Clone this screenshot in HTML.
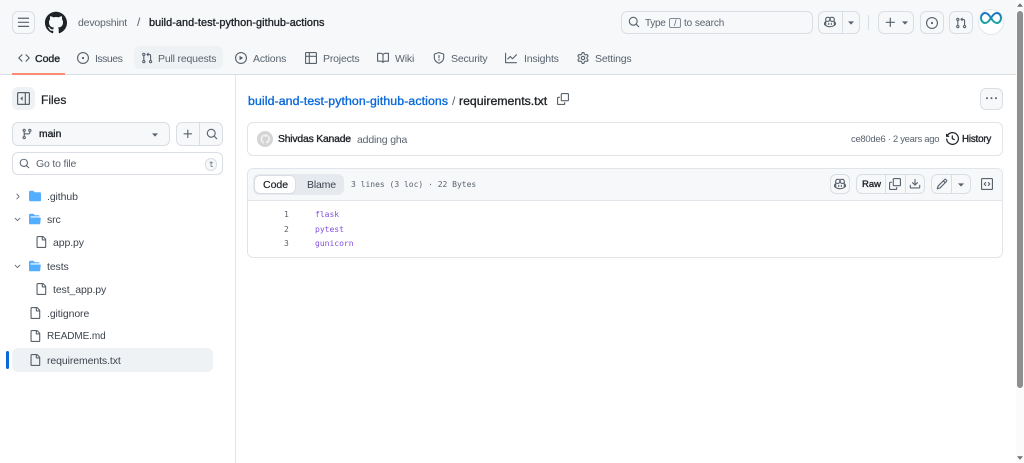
<!DOCTYPE html>
<html lang="en"><head><meta charset="utf-8"><title>requirements.txt</title>
<style>
*{box-sizing:border-box}
html,body{margin:0;padding:0;width:1024px;height:463px;overflow:hidden;background:#fff;font-family:"Liberation Sans",Arial,sans-serif;color:#1f2328;font-size:10.5px;letter-spacing:-.18px}
.a,.t,svg.i{position:absolute}
.t{white-space:nowrap;line-height:14px;height:14px}
svg.i{fill:#59636e;overflow:visible}
.m{color:#59636e}
.b{position:absolute;border:1px solid #d9dee4;border-radius:6px;background:#f6f8fa}
.s{font-weight:400;-webkit-text-stroke:.35px;letter-spacing:0}
.mono{font-family:"DejaVu Sans Mono","Liberation Mono",monospace;font-size:8px;letter-spacing:0}
.v{position:absolute;width:1px;background:#d9dee4}
.tr{color:#3d444d;letter-spacing:-.1px}
</style></head><body>
<svg width="0" height="0" style="position:absolute"><defs>
<linearGradient id="inf" x1="0" y1="0" x2="0" y2="1"><stop offset="0" stop-color="#1b74c5"/><stop offset="1" stop-color="#18a5a0"/></linearGradient>
<symbol id="bars" viewBox="0 0 16 16"><path d="M1 2.75A.75.75 0 0 1 1.75 2h12.5a.75.75 0 0 1 0 1.5H1.75A.75.75 0 0 1 1 2.75Zm0 5A.75.75 0 0 1 1.75 7h12.5a.75.75 0 0 1 0 1.5H1.75A.75.75 0 0 1 1 7.75ZM1.75 12h12.5a.75.75 0 0 1 0 1.5H1.75a.75.75 0 0 1 0-1.5Z"/></symbol>
<symbol id="gh" viewBox="0 0 24 24"><path d="M12.5.75C6.146.75 1 5.896 1 12.25c0 5.089 3.292 9.387 7.863 10.91.575.101.79-.244.79-.546 0-.273-.014-1.178-.014-2.142-2.889.532-3.636-.704-3.866-1.35-.13-.331-.69-1.352-1.18-1.625-.402-.216-.977-.748-.014-.762.906-.014 1.553.834 1.769 1.179 1.035 1.74 2.688 1.25 3.349.948.1-.747.402-1.25.733-1.538-2.559-.287-5.232-1.279-5.232-5.678 0-1.25.445-2.285 1.178-3.09-.115-.288-.517-1.467.115-3.048 0 0 .963-.302 3.163 1.179.92-.259 1.897-.388 2.875-.388.977 0 1.955.13 2.875.388 2.2-1.495 3.162-1.179 3.162-1.179.633 1.581.23 2.76.115 3.048.733.805 1.179 1.825 1.179 3.09 0 4.413-2.688 5.39-5.247 5.678.417.36.776 1.05.776 2.128 0 1.538-.014 2.774-.014 3.162 0 .302.216.662.79.547C20.709 21.637 24 17.324 24 12.25 24 5.896 18.854.75 12.5.75Z"/></symbol>
<symbol id="code" viewBox="0 0 16 16"><path d="m11.28 3.22 4.25 4.25a.75.75 0 0 1 0 1.06l-4.25 4.25a.749.749 0 0 1-1.275-.326.749.749 0 0 1 .215-.734L13.94 8l-3.72-3.72a.749.749 0 0 1 .326-1.275.749.749 0 0 1 .734.215Zm-6.56 0a.751.751 0 0 1 1.042.018.751.751 0 0 1 .018 1.042L2.06 8l3.72 3.72a.749.749 0 0 1-.326 1.275.749.749 0 0 1-.734-.215L.47 8.53a.75.75 0 0 1 0-1.06Z"/></symbol>
<symbol id="issue" viewBox="0 0 16 16"><path d="M8 9.5a1.5 1.5 0 1 0 0-3 1.5 1.5 0 0 0 0 3Z"/><path d="M8 0a8 8 0 1 1 0 16A8 8 0 0 1 8 0ZM1.5 8a6.5 6.5 0 1 0 13 0 6.5 6.5 0 0 0-13 0Z"/></symbol>
<symbol id="pr" viewBox="0 0 16 16"><path d="M1.5 3.25a2.25 2.25 0 1 1 3 2.122v5.256a2.251 2.251 0 1 1-1.5 0V5.372A2.25 2.25 0 0 1 1.5 3.25Zm5.677-.177L9.573.677A.25.25 0 0 1 10 .854V2.5h1A2.5 2.5 0 0 1 13.5 5v5.628a2.251 2.251 0 1 1-1.5 0V5a1 1 0 0 0-1-1h-1v1.646a.25.25 0 0 1-.427.177L7.177 3.427a.25.25 0 0 1 0-.354ZM3.75 2.5a.75.75 0 1 0 0 1.5.75.75 0 0 0 0-1.5Zm0 9.5a.75.75 0 1 0 0 1.5.75.75 0 0 0 0-1.5Zm8.25.75a.75.75 0 1 0 1.5 0 .75.75 0 0 0-1.5 0Z"/></symbol>
<symbol id="play" viewBox="0 0 16 16"><path d="M8 0a8 8 0 1 1 0 16A8 8 0 0 1 8 0ZM1.5 8a6.5 6.5 0 1 0 13 0 6.5 6.5 0 0 0-13 0Zm4.879-2.773 4.264 2.559a.25.25 0 0 1 0 .428l-4.264 2.559A.25.25 0 0 1 6 10.559V5.442a.25.25 0 0 1 .379-.215Z"/></symbol>
<symbol id="table" viewBox="0 0 16 16"><path d="M0 1.75C0 .784.784 0 1.75 0h12.5C15.216 0 16 .784 16 1.75v12.5A1.75 1.75 0 0 1 14.25 16H1.75A1.75 1.75 0 0 1 0 14.25ZM6.5 6.5v8h7.75a.25.25 0 0 0 .25-.25V6.5Zm8-1.5V1.75a.25.25 0 0 0-.25-.25H6.5V5Zm-13 1.5v7.75c0 .138.112.25.25.25H5v-8ZM5 5V1.5H1.75a.25.25 0 0 0-.25.25V5Z"/></symbol>
<symbol id="book" viewBox="0 0 16 16"><path d="M0 1.75A.75.75 0 0 1 .75 1h4.253c1.227 0 2.317.59 3 1.501A3.743 3.743 0 0 1 11.006 1h4.245a.75.75 0 0 1 .75.75v10.5a.75.75 0 0 1-.75.75h-4.507a2.25 2.25 0 0 0-1.591.659l-.622.621a.75.75 0 0 1-1.06 0l-.622-.621A2.25 2.25 0 0 0 5.258 13H.75a.75.75 0 0 1-.75-.75Zm7.251 10.324.004-5.073-.002-2.253A2.25 2.25 0 0 0 5.003 2.5H1.5v9h3.757a3.75 3.75 0 0 1 1.994.574ZM8.755 4.75l-.004 7.322a3.752 3.752 0 0 1 1.992-.572H14.5v-9h-3.495a2.25 2.25 0 0 0-2.25 2.25Z"/></symbol>
<symbol id="shield" viewBox="0 0 16 16"><path d="M7.467.133a1.748 1.748 0 0 1 1.066 0l5.25 1.68A1.75 1.75 0 0 1 15 3.48V7c0 1.566-.32 3.182-1.303 4.682-.983 1.498-2.585 2.813-5.032 3.855a1.697 1.697 0 0 1-1.33 0c-2.447-1.042-4.049-2.357-5.032-3.855C1.32 10.182 1 8.566 1 7V3.48a1.75 1.75 0 0 1 1.217-1.667Zm.61 1.429a.25.25 0 0 0-.153 0l-5.25 1.68a.25.25 0 0 0-.174.238V7c0 1.358.275 2.666 1.057 3.86.784 1.194 2.121 2.34 4.366 3.297a.196.196 0 0 0 .154 0c2.245-.956 3.582-2.104 4.366-3.298C13.225 9.666 13.5 8.36 13.5 7V3.48a.251.251 0 0 0-.174-.237l-5.25-1.68ZM8.75 4.75v3a.75.75 0 0 1-1.5 0v-3a.75.75 0 0 1 1.5 0ZM9 10.5a1 1 0 1 1-2 0 1 1 0 0 1 2 0Z"/></symbol>
<symbol id="graph" viewBox="0 0 16 16"><path d="M1.5 1.75V13.5h13.75a.75.75 0 0 1 0 1.5H.75a.75.75 0 0 1-.75-.75V1.75a.75.75 0 0 1 1.5 0Zm14.28 2.53-5.25 5.25a.75.75 0 0 1-1.06 0L7 7.06 4.28 9.78a.751.751 0 0 1-1.042-.018.751.751 0 0 1-.018-1.042l3.25-3.25a.75.75 0 0 1 1.06 0L10 7.94l4.72-4.72a.751.751 0 0 1 1.042.018.751.751 0 0 1 .018 1.042Z"/></symbol>
<symbol id="gear" viewBox="0 0 16 16"><path d="M8 0a8.2 8.2 0 0 1 .701.031C9.444.095 9.99.645 10.16 1.29l.288 1.107c.018.066.079.158.212.224.231.114.454.243.668.386.123.082.233.09.299.071l1.103-.303c.644-.176 1.392.021 1.82.63.27.385.506.792.704 1.218.315.675.111 1.422-.364 1.891l-.814.806c-.049.048-.098.147-.088.294.016.257.016.515 0 .772-.01.147.038.246.088.294l.814.806c.475.469.679 1.216.364 1.891a7.977 7.977 0 0 1-.704 1.217c-.428.61-1.176.807-1.82.63l-1.102-.302c-.067-.019-.177-.011-.3.071a5.909 5.909 0 0 1-.668.386c-.133.066-.194.158-.211.224l-.29 1.106c-.168.646-.715 1.196-1.458 1.26a8.006 8.006 0 0 1-1.402 0c-.743-.064-1.289-.614-1.458-1.26l-.289-1.106c-.018-.066-.079-.158-.212-.224a5.738 5.738 0 0 1-.668-.386c-.123-.082-.233-.09-.299-.071l-1.103.303c-.644.176-1.392-.021-1.82-.63a8.12 8.12 0 0 1-.704-1.218c-.315-.675-.111-1.422.363-1.891l.815-.806c.05-.048.098-.147.088-.294a6.214 6.214 0 0 1 0-.772c.01-.147-.038-.246-.088-.294l-.815-.806C.635 6.045.431 5.298.746 4.623a7.92 7.92 0 0 1 .704-1.217c.428-.61 1.176-.807 1.82-.63l1.102.302c.067.019.177.011.3-.071.214-.143.437-.272.668-.386.133-.066.194-.158.211-.224l.29-1.106C6.009.645 6.556.095 7.299.03 7.53.01 7.764 0 8 0Zm-.571 1.525c-.036.003-.108.036-.137.146l-.289 1.105c-.147.561-.549.967-.998 1.189-.173.086-.34.183-.5.29-.417.278-.97.423-1.529.27l-1.103-.303c-.109-.03-.175.016-.195.045-.22.312-.412.644-.573.99-.014.031-.021.11.059.19l.815.806c.411.406.562.957.53 1.456a4.709 4.709 0 0 0 0 .582c.032.499-.119 1.05-.53 1.456l-.815.806c-.081.08-.073.159-.059.19.162.346.353.677.573.989.02.03.085.076.195.046l1.102-.303c.56-.153 1.113-.008 1.53.27.161.107.328.204.501.29.447.222.85.629.997 1.189l.289 1.105c.029.109.101.143.137.146a6.6 6.6 0 0 0 1.142 0c.036-.003.108-.036.137-.146l.289-1.105c.147-.561.549-.967.998-1.189.173-.086.34-.183.5-.29.417-.278.97-.423 1.529-.27l1.103.303c.109.029.175-.016.195-.045.22-.313.411-.644.573-.99.014-.031.021-.11-.059-.19l-.815-.806c-.411-.406-.562-.957-.53-1.456a4.709 4.709 0 0 0 0-.582c-.032-.499.119-1.05.53-1.456l.815-.806c.081-.08.073-.159.059-.19a6.464 6.464 0 0 0-.573-.989c-.02-.03-.085-.076-.195-.046l-1.102.303c-.56.153-1.113.008-1.53-.27a4.44 4.44 0 0 0-.501-.29c-.447-.222-.85-.629-.997-1.189l-.289-1.105c-.029-.11-.101-.143-.137-.146a6.6 6.6 0 0 0-1.142 0ZM11 8a3 3 0 1 1-6 0 3 3 0 0 1 6 0ZM9.5 8a1.5 1.5 0 1 0-3.001.001A1.5 1.5 0 0 0 9.5 8Z"/></symbol>
<symbol id="search" viewBox="0 0 16 16"><path d="M10.68 11.74a6 6 0 0 1-7.922-8.982 6 6 0 0 1 8.982 7.922l3.04 3.04a.749.749 0 0 1-.326 1.275.749.749 0 0 1-.734-.215ZM11.5 7a4.499 4.499 0 1 0-8.997 0A4.499 4.499 0 0 0 11.5 7Z"/></symbol>
<symbol id="copilot" viewBox="0 0 16 16"><path d="M7.998 15.035c-4.562 0-7.873-2.914-7.998-3.749V9.338c.085-.628.677-1.686 1.588-2.065.013-.07.024-.143.036-.218.029-.183.06-.384.126-.612-.201-.508-.254-1.084-.254-1.656 0-.87.128-1.769.693-2.484.579-.733 1.494-1.124 2.724-1.261 1.206-.134 2.262.034 2.944.765.05.053.096.108.139.165.044-.057.094-.112.143-.165.682-.731 1.738-.899 2.944-.765 1.23.137 2.145.528 2.724 1.261.566.715.693 1.614.693 2.484 0 .572-.053 1.148-.254 1.656.066.228.098.429.126.612.012.076.024.148.037.218.924.385 1.522 1.471 1.591 2.095v1.872c0 .766-3.351 3.795-8.002 3.795Zm0-1.485c2.28 0 4.584-1.11 5.002-1.433V7.862l-.023-.116c-.49.21-1.075.291-1.727.291-1.146 0-2.059-.327-2.71-.991A3.222 3.222 0 0 1 8 6.303a3.24 3.24 0 0 1-.544.743c-.65.664-1.563.991-2.71.991-.652 0-1.236-.081-1.727-.291l-.023.116v4.255c.419.323 2.722 1.433 5.002 1.433ZM6.762 2.83c-.193-.206-.637-.413-1.682-.297-1.019.113-1.479.404-1.713.7-.247.312-.369.789-.369 1.554 0 .793.129 1.171.308 1.371.162.181.519.379 1.442.379.853 0 1.339-.235 1.638-.54.315-.322.527-.827.617-1.553.117-.935-.037-1.395-.241-1.614Zm4.155-.297c-1.044-.116-1.488.091-1.681.297-.204.219-.359.679-.242 1.614.091.726.303 1.231.618 1.553.299.305.784.54 1.638.54.922 0 1.28-.198 1.442-.379.179-.2.308-.578.308-1.371 0-.765-.123-1.242-.37-1.554-.233-.296-.693-.587-1.713-.7Z"/><path d="M6.25 9.037a.75.75 0 0 1 .75.75v1.501a.75.75 0 0 1-1.5 0V9.787a.75.75 0 0 1 .75-.75Zm4.25.75v1.501a.75.75 0 0 1-1.5 0V9.787a.75.75 0 0 1 1.5 0Z"/></symbol>
<symbol id="plus" viewBox="0 0 16 16"><path d="M7.75 2a.75.75 0 0 1 .75.75V7h4.25a.75.75 0 0 1 0 1.5H8.5v4.25a.75.75 0 0 1-1.5 0V8.5H2.75a.75.75 0 0 1 0-1.5H7V2.75A.75.75 0 0 1 7.75 2Z"/></symbol>
<symbol id="kebab" viewBox="0 0 16 16"><path d="M8 9a1.5 1.5 0 1 0 0-3 1.5 1.5 0 0 0 0 3ZM1.5 9a1.5 1.5 0 1 0 0-3 1.5 1.5 0 0 0 0 3Zm13 0a1.5 1.5 0 1 0 0-3 1.5 1.5 0 0 0 0 3Z"/></symbol>
<symbol id="side" viewBox="0 0 16 16"><path d="M7 5.2v5.6L4 8Z"/><path d="M1.75 0h12.5C15.216 0 16 .784 16 1.75v12.5A1.75 1.75 0 0 1 14.25 16H1.75A1.75 1.75 0 0 1 0 14.25V1.75C0 .784.784 0 1.75 0ZM1.5 1.75v12.5c0 .138.112.25.25.25H9.5v-13H1.75a.25.25 0 0 0-.25.25ZM11 14.5h3.25a.25.25 0 0 0 .25-.25V1.75a.25.25 0 0 0-.25-.25H11Z"/></symbol>
<symbol id="branch" viewBox="0 0 16 16"><path d="M9.5 3.25a2.25 2.25 0 1 1 3 2.122V6A2.5 2.5 0 0 1 10 8.5H6a1 1 0 0 0-1 1v1.128a2.251 2.251 0 1 1-1.5 0V5.372a2.25 2.25 0 1 1 1.5 0v1.836A2.493 2.493 0 0 1 6 7h4a1 1 0 0 0 1-1v-.628A2.25 2.25 0 0 1 9.5 3.25Zm-6 0a.75.75 0 1 0 1.5 0 .75.75 0 0 0-1.5 0Zm8.25-.75a.75.75 0 1 0 0 1.5.75.75 0 0 0 0-1.5ZM4.25 12a.75.75 0 1 0 0 1.5.75.75 0 0 0 0-1.5Z"/></symbol>
<symbol id="cr" viewBox="0 0 16 16"><path d="M6.22 3.22a.75.75 0 0 1 1.06 0l4.25 4.25a.75.75 0 0 1 0 1.06l-4.25 4.25a.751.751 0 0 1-1.042-.018.751.751 0 0 1-.018-1.042L9.94 8 6.22 4.28a.75.75 0 0 1 0-1.06Z"/></symbol>
<symbol id="cd" viewBox="0 0 16 16"><path d="M12.78 5.22a.749.749 0 0 1 0 1.06l-4.25 4.25a.749.749 0 0 1-1.06 0L3.22 6.28a.749.749 0 1 1 1.06-1.06L8 8.939l3.72-3.719a.749.749 0 0 1 1.06 0Z"/></symbol>
<symbol id="dir" viewBox="0 0 16 16"><path d="M1.75 1A1.75 1.75 0 0 0 0 2.75v10.5C0 14.216.784 15 1.75 15h12.5A1.75 1.75 0 0 0 16 13.25v-8.5A1.75 1.75 0 0 0 14.25 3H7.5a.25.25 0 0 1-.2-.1l-.9-1.2C6.07 1.26 5.55 1 5 1H1.75Z"/></symbol>
<symbol id="diro" viewBox="0 0 16 16"><path d="M.513 1.513A1.75 1.75 0 0 1 1.75 1h3.5c.55 0 1.07.26 1.4.7l.9 1.2a.25.25 0 0 0 .2.1H13a1 1 0 0 1 1 1v.5H2.75a.75.75 0 0 0 0 1.5h11.978a1 1 0 0 1 .994 1.117L15 13.25A1.75 1.75 0 0 1 13.25 15H1.75A1.75 1.75 0 0 1 0 13.25V2.75c0-.464.184-.91.513-1.237Z"/></symbol>
<symbol id="file" viewBox="0 0 16 16"><path d="M2 1.75C2 .784 2.784 0 3.75 0h6.586c.464 0 .909.184 1.237.513l2.914 2.914c.329.328.513.773.513 1.237v9.586A1.75 1.75 0 0 1 13.25 16h-9.5A1.75 1.75 0 0 1 2 14.25Zm1.75-.25a.25.25 0 0 0-.25.25v12.5c0 .138.112.25.25.25h9.5a.25.25 0 0 0 .25-.25V6h-2.75A1.75 1.75 0 0 1 9 4.25V1.5Zm6.75.062V4.25c0 .138.112.25.25.25h2.688l-.011-.013-2.914-2.914-.013-.011Z"/></symbol>
<symbol id="copy" viewBox="0 0 16 16"><path d="M0 6.75C0 5.784.784 5 1.75 5h1.5a.75.75 0 0 1 0 1.5h-1.5a.25.25 0 0 0-.25.25v7.5c0 .138.112.25.25.25h7.5a.25.25 0 0 0 .25-.25v-1.5a.75.75 0 0 1 1.5 0v1.5A1.75 1.75 0 0 1 9.25 16h-7.5A1.75 1.75 0 0 1 0 14.25Z"/><path d="M5 1.75C5 .784 5.784 0 6.75 0h7.5C15.216 0 16 .784 16 1.75v7.5A1.75 1.75 0 0 1 14.25 11h-7.5A1.75 1.75 0 0 1 5 9.25Zm1.75-.25a.25.25 0 0 0-.25.25v7.5c0 .138.112.25.25.25h7.5a.25.25 0 0 0 .25-.25v-7.5a.25.25 0 0 0-.25-.25Z"/></symbol>
<symbol id="dl" viewBox="0 0 16 16"><path d="M2.75 14A1.75 1.75 0 0 1 1 12.25v-2.5a.75.75 0 0 1 1.5 0v2.5c0 .138.112.25.25.25h10.5a.25.25 0 0 0 .25-.25v-2.5a.75.75 0 0 1 1.5 0v2.5A1.75 1.75 0 0 1 13.25 14Z"/><path d="M7.25 7.689V2a.75.75 0 0 1 1.5 0v5.689l1.97-1.969a.749.749 0 1 1 1.06 1.06l-3.25 3.25a.749.749 0 0 1-1.06 0L4.22 6.78a.749.749 0 1 1 1.06-1.06l1.97 1.969Z"/></symbol>
<symbol id="pencil" viewBox="0 0 16 16"><path d="M11.013 1.427a1.75 1.75 0 0 1 2.474 0l1.086 1.086a1.75 1.75 0 0 1 0 2.474l-8.61 8.61c-.21.21-.47.364-.756.445l-3.251.93a.75.75 0 0 1-.927-.928l.929-3.25c.081-.286.235-.547.445-.758l8.61-8.61Zm.176 4.823L9.75 4.81l-6.286 6.287a.253.253 0 0 0-.064.108l-.558 1.953 1.953-.558a.253.253 0 0 0 .108-.064Zm1.238-3.763a.25.25 0 0 0-.354 0L10.811 3.75l1.439 1.44 1.263-1.263a.25.25 0 0 0 0-.354Z"/></symbol>
<symbol id="csq" viewBox="0 0 16 16"><path d="M0 1.75C0 .784.784 0 1.75 0h12.5C15.216 0 16 .784 16 1.75v12.5A1.75 1.75 0 0 1 14.25 16H1.75A1.75 1.75 0 0 1 0 14.25Zm1.75-.25a.25.25 0 0 0-.25.25v12.5c0 .138.112.25.25.25h12.5a.25.25 0 0 0 .25-.25V1.75a.25.25 0 0 0-.25-.25Zm7.47 3.97a.75.75 0 0 1 1.06 0l2 2a.75.75 0 0 1 0 1.06l-2 2a.749.749 0 0 1-1.275-.326.749.749 0 0 1 .215-.734L10.69 8 9.22 6.53a.75.75 0 0 1 0-1.06ZM6.78 6.53 5.31 8l1.47 1.47a.749.749 0 0 1-.326 1.275.749.749 0 0 1-.734-.215l-2-2a.75.75 0 0 1 0-1.06l2-2a.751.751 0 0 1 1.042.018.751.751 0 0 1 .018 1.042Z"/></symbol>
<symbol id="hist" viewBox="0 0 16 16"><path d="m.427 1.927 1.215 1.215a8.002 8.002 0 1 1-1.6 5.685.75.75 0 1 1 1.493-.154 6.5 6.5 0 1 0 1.18-4.458l1.358 1.358A.25.25 0 0 1 3.896 6H.25A.25.25 0 0 1 0 5.75V2.104a.25.25 0 0 1 .427-.177ZM7.75 4a.75.75 0 0 1 .75.75v2.992l2.028.812a.75.75 0 0 1-.557 1.392l-2.5-1A.751.751 0 0 1 7 8.25v-3.5A.75.75 0 0 1 7.75 4Z"/></symbol>
<symbol id="caret" viewBox="0 0 6 4"><path d="M0 .4h6L3 3.6Z"/></symbol>
</defs></svg>

<!-- header -->
<div class="a" style="left:0;top:0;width:1016px;height:75px;background:#f6f8fa;border-bottom:1px solid #d9dee4"></div>
<div class="b" style="left:12px;top:11px;width:23px;height:23px"></div>
<svg class="i" style="left:17px;top:16px" width="13" height="13"><use href="#bars"/></svg>
<svg class="i" style="left:44px;top:11px;fill:#1f2328" width="23" height="23"><use href="#gh"/></svg>
<span class="t m" style="left:78px;top:16px">devopshint</span>
<span class="t m" style="left:137px;top:15px;font-size:12px">/</span>
<span class="t s" style="left:149px;top:16px;font-size:10.9px;letter-spacing:.05px">build-and-test-python-github-actions</span>

<svg class="i" style="left:18px;top:52px" width="12" height="12"><use href="#code"/></svg>
<span class="t s" style="left:35px;top:52px;font-size:10.5px">Code</span>
<div class="a" style="left:12px;top:73px;width:53px;height:2px;background:#fd8c73"></div>
<svg class="i" style="left:77px;top:52px" width="12" height="12"><use href="#issue"/></svg>
<span class="t m" style="left:95px;top:52px;letter-spacing:-.5px">Issues</span>
<div class="a" style="left:134px;top:46px;width:89px;height:23px;background:#eff2f5;border-radius:6px"></div>
<svg class="i" style="left:141px;top:52px" width="12" height="12"><use href="#pr"/></svg>
<span class="t m" style="left:158px;top:52px">Pull requests</span>
<svg class="i" style="left:235px;top:52px" width="12" height="12"><use href="#play"/></svg>
<span class="t m" style="left:253px;top:52px">Actions</span>
<svg class="i" style="left:305px;top:52px" width="12" height="12"><use href="#table"/></svg>
<span class="t m" style="left:323px;top:52px">Projects</span>
<svg class="i" style="left:377px;top:52px" width="12" height="12"><use href="#book"/></svg>
<span class="t m" style="left:395px;top:52px">Wiki</span>
<svg class="i" style="left:433px;top:52px" width="12" height="12"><use href="#shield"/></svg>
<span class="t m" style="left:451px;top:52px">Security</span>
<svg class="i" style="left:505px;top:52px" width="12" height="12"><use href="#graph"/></svg>
<span class="t m" style="left:524px;top:52px">Insights</span>
<svg class="i" style="left:577px;top:52px" width="12" height="12"><use href="#gear"/></svg>
<span class="t m" style="left:595px;top:52px">Settings</span>

<div class="b" style="left:621px;top:11px;width:192px;height:23px"></div>
<svg class="i" style="left:628px;top:16px" width="12" height="12"><use href="#search"/></svg>
<span class="t m" style="left:645px;top:17px;font-size:10px;letter-spacing:-.3px">Type</span>
<div class="a" style="left:669px;top:18px;width:12px;height:10px;border:1px solid #818b98;border-radius:2px"></div>
<span class="t m" style="left:674px;top:16px;font-size:9px">/</span>
<span class="t m" style="left:684px;top:17px;font-size:10px;letter-spacing:-.1px">to search</span>
<div class="b" style="left:818px;top:11px;width:42px;height:23px"></div>
<div class="v" style="left:842px;top:11px;height:23px"></div>
<svg class="i" style="left:824px;top:16px" width="12" height="12"><use href="#copilot"/></svg>
<svg class="i" style="left:848px;top:21px" width="6" height="4"><use href="#caret"/></svg>
<div class="v" style="left:868px;top:15px;height:15px"></div>
<div class="b" style="left:878px;top:11px;width:36px;height:23px"></div>
<svg class="i" style="left:884px;top:16px" width="13" height="13"><use href="#plus"/></svg>
<svg class="i" style="left:902px;top:21px" width="6" height="4"><use href="#caret"/></svg>
<div class="b" style="left:920px;top:11px;width:24px;height:23px"></div>
<svg class="i" style="left:926px;top:17px" width="12" height="12"><use href="#issue"/></svg>
<div class="b" style="left:949px;top:11px;width:24px;height:23px"></div>
<svg class="i" style="left:955px;top:17px" width="12" height="12"><use href="#pr"/></svg>
<div class="a" style="left:978px;top:9px;width:26px;height:26px;border-radius:50%;background:#fff;border:1px solid #e3e7ea"></div>
<svg class="i" style="left:980px;top:12px;fill:none" width="22" height="12" viewBox="0 0 22 12"><path d="M11 6C9.1 2.9 7.4 1 5.2 1 2.9 1 1 3.2 1 6s1.9 5 4.2 5c2.2 0 3.9-1.9 5.8-5Zm0 0c1.9-3.1 3.6-5 5.8-5C19.1 1 21 3.2 21 6s-1.9 5-4.2 5c-2.2 0-3.9-1.9-5.8-5Z" stroke="url(#inf)" stroke-width="2"/></svg>

<!-- sidebar -->
<div class="a" style="left:235px;top:75px;width:1px;height:388px;background:#e2e6ea"></div>
<div class="a" style="left:12px;top:87px;width:23px;height:23px;background:#eff2f5;border-radius:6px"></div>
<svg class="i" style="left:17px;top:92px" width="13" height="13"><use href="#side"/></svg>
<span class="t s" style="left:41px;top:93px;font-size:12px;-webkit-text-stroke:.25px">Files</span>
<div class="b" style="left:12px;top:122px;width:158px;height:24px"></div>
<svg class="i" style="left:21px;top:128px" width="12" height="12"><use href="#branch"/></svg>
<span class="t s" style="left:39px;top:128px;font-size:10.3px">main</span>
<svg class="i" style="left:152px;top:133px" width="6" height="4"><use href="#caret"/></svg>
<div class="b" style="left:176px;top:122px;width:47px;height:24px"></div>
<div class="v" style="left:199px;top:122px;height:24px"></div>
<svg class="i" style="left:182px;top:128px" width="12" height="12"><use href="#plus"/></svg>
<svg class="i" style="left:206px;top:128px" width="12" height="12"><use href="#search"/></svg>
<div class="b" style="left:12px;top:152px;width:211px;height:23px;background:#fff"></div>
<svg class="i" style="left:19px;top:158px" width="11" height="11"><use href="#search"/></svg>
<span class="t m" style="left:36px;top:157px">Go to file</span>
<div class="b" style="left:205px;top:158px;width:12px;height:13px"></div>
<span class="t m mono" style="left:209px;top:158px">t</span>

<svg class="i" style="left:13px;top:192px" width="9" height="9"><use href="#cr"/></svg>
<svg class="i" style="left:29px;top:190px;fill:#54aeff" width="12" height="12"><use href="#dir"/></svg>
<span class="t tr" style="left:47px;top:190px">.github</span>
<svg class="i" style="left:13px;top:215px" width="9" height="9"><use href="#cd"/></svg>
<svg class="i" style="left:29px;top:213px;fill:#54aeff" width="12" height="12"><use href="#diro"/></svg>
<span class="t tr" style="left:47px;top:213px">src</span>
<svg class="i" style="left:35px;top:236px" width="12" height="12"><use href="#file"/></svg>
<span class="t tr" style="left:53px;top:236px">app.py</span>
<svg class="i" style="left:13px;top:262px" width="9" height="9"><use href="#cd"/></svg>
<svg class="i" style="left:29px;top:260px;fill:#54aeff" width="12" height="12"><use href="#diro"/></svg>
<span class="t tr" style="left:47px;top:260px">tests</span>
<svg class="i" style="left:35px;top:283px" width="12" height="12"><use href="#file"/></svg>
<span class="t tr" style="left:53px;top:283px">test_app.py</span>
<svg class="i" style="left:29px;top:307px" width="12" height="12"><use href="#file"/></svg>
<span class="t tr" style="left:47px;top:307px">.gitignore</span>
<svg class="i" style="left:29px;top:330px" width="12" height="12"><use href="#file"/></svg>
<span class="t tr" style="left:47px;top:330px;font-size:10px">README.md</span>
<div class="a" style="left:12px;top:348px;width:201px;height:24px;background:#eff2f5;border-radius:6px"></div>
<div class="a" style="left:6px;top:351px;width:3px;height:18px;background:#0969da;border-radius:2px"></div>
<svg class="i" style="left:29px;top:354px" width="12" height="12"><use href="#file"/></svg>
<span class="t tr" style="left:47px;top:354px">requirements.txt</span>

<!-- breadcrumb -->
<span class="t s" style="left:248px;top:94px;font-size:12.3px;color:#0969da;letter-spacing:.11px">build-and-test-python-github-actions</span>
<span class="t m" style="left:452px;top:94px;font-size:12px">/</span>
<span class="t s" style="left:459px;top:94px;font-size:12.3px">requirements.txt</span>
<svg class="i" style="left:557px;top:93px" width="12" height="12"><use href="#copy"/></svg>
<div class="b" style="left:980px;top:88px;width:23px;height:22px"></div>
<svg class="i" style="left:986px;top:93px" width="11" height="11"><use href="#kebab"/></svg>

<!-- commit -->
<div class="a" style="left:247px;top:122px;width:756px;height:34px;border:1px solid #e1e5e9;border-radius:6px;background:#fff"></div>
<div class="a" style="left:257px;top:131px;width:16px;height:16px;border-radius:50%;background:#d4d4d4"></div>
<svg class="i" style="left:260px;top:134px;fill:#f2f2f2" width="10" height="10"><use href="#gh"/></svg>
<span class="t s" style="left:278px;top:133px;font-size:10.4px;letter-spacing:-.2px">Shivdas Kanade</span>
<span class="t m" style="left:357px;top:133px">adding gha</span>
<span class="t m" style="left:851px;top:133px;font-size:9.5px;letter-spacing:-.3px">ce80de6 · 2 years ago</span>
<svg class="i" style="left:946px;top:132px;fill:#1f2328" width="13" height="13"><use href="#hist"/></svg>
<span class="t s" style="left:962px;top:133px;font-size:9.8px;letter-spacing:-.2px">History</span>

<!-- file -->
<div class="a" style="left:247px;top:168px;width:756px;height:90px;border:1px solid #e1e5e9;border-radius:6px;background:#fff;overflow:hidden">
<div style="height:32px;background:#f6f8fa;border-bottom:1px solid #e1e5e9"></div></div>
<div class="a" style="left:253px;top:174px;width:91px;height:21px;background:#e6eaef;border-radius:6px"></div>
<div class="a" style="left:254px;top:175px;width:42px;height:19px;background:#fff;border:1px solid #d9dee4;border-radius:6px"></div>
<span class="t s" style="left:263px;top:178px;font-size:10.5px;-webkit-text-stroke:.2px">Code</span>
<span class="t" style="left:307px;top:178px;font-size:10.5px;color:#3d444d">Blame</span>
<span class="t m mono" style="left:351px;top:178px">3 lines (3 loc) · 22 Bytes</span>

<div class="b" style="left:830px;top:174px;width:20px;height:20px"></div>
<svg class="i" style="left:834px;top:178px" width="12" height="12"><use href="#copilot"/></svg>
<div class="b" style="left:856px;top:174px;width:69px;height:20px"></div>
<div class="v" style="left:885px;top:174px;height:20px"></div>
<div class="v" style="left:905px;top:174px;height:20px"></div>
<span class="t s" style="left:862px;top:178px;font-size:9.5px">Raw</span>
<svg class="i" style="left:889px;top:178px" width="12" height="12"><use href="#copy"/></svg>
<svg class="i" style="left:909px;top:178px" width="12" height="12"><use href="#dl"/></svg>
<div class="b" style="left:931px;top:174px;width:40px;height:20px"></div>
<div class="v" style="left:951px;top:174px;height:20px"></div>
<svg class="i" style="left:936px;top:178px" width="12" height="12"><use href="#pencil"/></svg>
<svg class="i" style="left:958px;top:183px" width="6" height="4"><use href="#caret"/></svg>
<svg class="i" style="left:981px;top:178px" width="12" height="12"><use href="#csq"/></svg>

<span class="t m mono" style="left:284px;top:208px">1</span>
<span class="t mono" style="left:315px;top:208px;color:#8250df">flask</span>
<span class="t m mono" style="left:284px;top:223px">2</span>
<span class="t mono" style="left:315px;top:223px;color:#8250df">pytest</span>
<span class="t m mono" style="left:284px;top:237px">3</span>
<span class="t mono" style="left:315px;top:237px;color:#8250df">gunicorn</span>

<!-- scrollbar -->
<div class="a" style="left:1016px;top:0;width:8px;height:463px;background:#fbfbfb"></div>
<div class="a" style="left:1017px;top:11px;width:6px;height:377px;background:#8f8f8f;border-radius:3px"></div>
<svg class="i" style="left:1017px;top:3px;fill:#707070" width="6" height="4" viewBox="0 0 6 4"><path d="M0 3.8h6L3 .2Z"/></svg>
<svg class="i" style="left:1017px;top:456px;fill:#707070" width="6" height="4" viewBox="0 0 6 4"><path d="M0 .2h6L3 3.8Z"/></svg>
</body></html>
